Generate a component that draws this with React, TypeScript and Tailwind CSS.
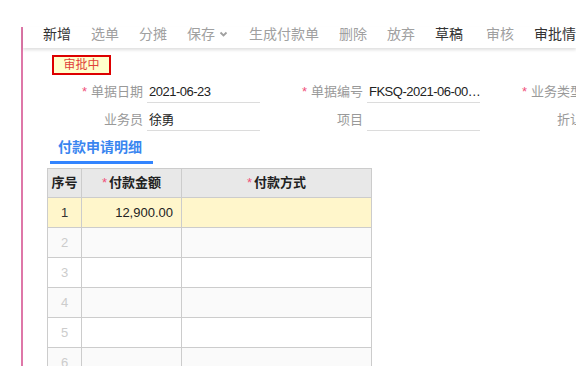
import React from 'react';

const FONT = { fontFamily: '"Liberation Sans", "Noto Sans CJK SC", sans-serif' };

// toolbar entries: label, dark?
const ACTIONS: { label: string; dark?: boolean; dropdown?: boolean }[] = [
    { label: '新增', dark: true },
    { label: '选单' },
    { label: '分摊' },
    { label: '保存', dropdown: true },
    { label: '生成付款单' },
    { label: '删除' },
    { label: '放弃' },
    { label: '草稿', dark: true },
];

const Chevron = () => (
    <svg width="12" height="14" viewBox="0 0 12 14" className="ml-[2px]">
        <path d="M3.5 5.5 L6.5 8.5 L9.5 5.5" fill="none" stroke="#a0a0a0" strokeWidth="1.8" />
    </svg>
);

const Field = ({ label, value, required }: { label: string; value?: string; required?: boolean }) => (
    <div className="flex w-[220px] shrink-0 items-center gap-[4px]">
        <div className="w-[103px] shrink-0 text-right text-[13px] leading-[22px] text-[#999] whitespace-nowrap">
            {required && <span className="mr-[4px] text-[#f0507a]">*</span>}
            {label}
        </div>
        <div className="h-[22px] w-[113px] shrink-0 overflow-hidden whitespace-nowrap border-b border-[#dcdcdc] pl-[2px] text-[13px] leading-[22px] tracking-[-0.5px] text-[#222]">
            {value}
        </div>
    </div>
);

const ROWS = [1, 2, 3, 4, 5, 6];

export default function App() {
    return (
        <div className="h-[366px] w-[576px] overflow-hidden bg-white" style={FONT}>
            <div className="ml-[21px] mt-[27px] h-[339px] border-l-2 border-[#de77a8]">
                {/* Toolbar */}
                <div className="flex h-[21px] items-start pl-[20px] shadow-[0_2px_3px_rgba(0,0,0,0.13)] whitespace-nowrap">
                    {ACTIONS.map((a) => (
                        <div key={a.label} className="mr-[20px] flex items-start">
                            <span className={`text-[14px] leading-[14px] ${a.dark ? 'text-[#333]' : 'text-[#a0a0a0]'}`}>{a.label}</span>
                            {a.dropdown && <Chevron />}
                        </div>
                    ))}
                    <div className="-ml-[9px] mr-[12px] mt-[-1px] h-[16px] w-px bg-[#dedede]" />
                    <span className="mr-[20px] text-[14px] leading-[14px] text-[#a0a0a0]">审核</span>
                    <span className="text-[14px] leading-[14px] text-[#333]">审批情况</span>
                </div>

                {/* Status badge */}
                <div className="ml-[29px] mt-[7px] flex h-[20px] w-[59px] items-center justify-center border-2 border-[#dd0000] bg-[#ffffcc] text-[12px] text-[#e0413a]">
                    审批中
                </div>

                {/* Header form */}
                <div className="ml-[17px] mt-[6px] flex flex-col gap-[6px]">
                    <div className="flex">
                        <Field label="单据日期" value="2021-06-23" required />
                        <Field label="单据编号" value="FKSQ-2021-06-00…" required />
                        <Field label="业务类型" required />
                    </div>
                    <div className="flex">
                        <Field label="业务员" value="徐勇" />
                        <Field label="项目" />
                        <Field label="折让" />
                    </div>
                </div>

                {/* Tab */}
                <div className="ml-[27px] mt-[6px] w-[103px] border-b-[3px] border-[#3385ff] pb-[4px] pl-[8px] text-[14px] font-bold leading-[20px] text-[#3a86f0]">
                    付款申请明细
                </div>

                {/* Detail grid */}
                <table className="ml-[24px] mt-[4px] w-[325px] table-fixed border-collapse text-[13px]">
                    <colgroup>
                        <col className="w-[34px]" />
                        <col className="w-[100px]" />
                        <col className="w-[190px]" />
                    </colgroup>
                    <thead>
                        <tr className="h-[29px] bg-[#e8e8e8]">
                            <th className="border border-[#cccccc] font-bold text-[#222]">序号</th>
                            <th className="border border-[#cccccc] font-bold text-[#222]">
                                <span className="mr-[2px] text-[#f0507a] font-normal">*</span>付款金额
                            </th>
                            <th className="border border-[#cccccc] font-bold text-[#222]">
                                <span className="mr-[2px] text-[#f0507a] font-normal">*</span>付款方式
                            </th>
                        </tr>
                    </thead>
                    <tbody>
                        {ROWS.map((n) => {
                            const bg = n === 1 ? 'bg-[#fff6cb]' : n % 2 === 0 ? 'bg-[#fafafa]' : 'bg-white';
                            return (
                                <tr key={n} className={`h-[30px] ${bg}`}>
                                    <td className={`border border-[#cccccc] text-center ${n === 1 ? 'text-[#333]' : 'text-[#cccccc]'}`}>{n}</td>
                                    <td className="border border-[#cccccc] pr-[8px] text-right text-[#222]">{n === 1 ? '12,900.00' : ''}</td>
                                    <td className="border border-[#cccccc]" />
                                </tr>
                            );
                        })}
                    </tbody>
                </table>
            </div>
        </div>
    );
}
